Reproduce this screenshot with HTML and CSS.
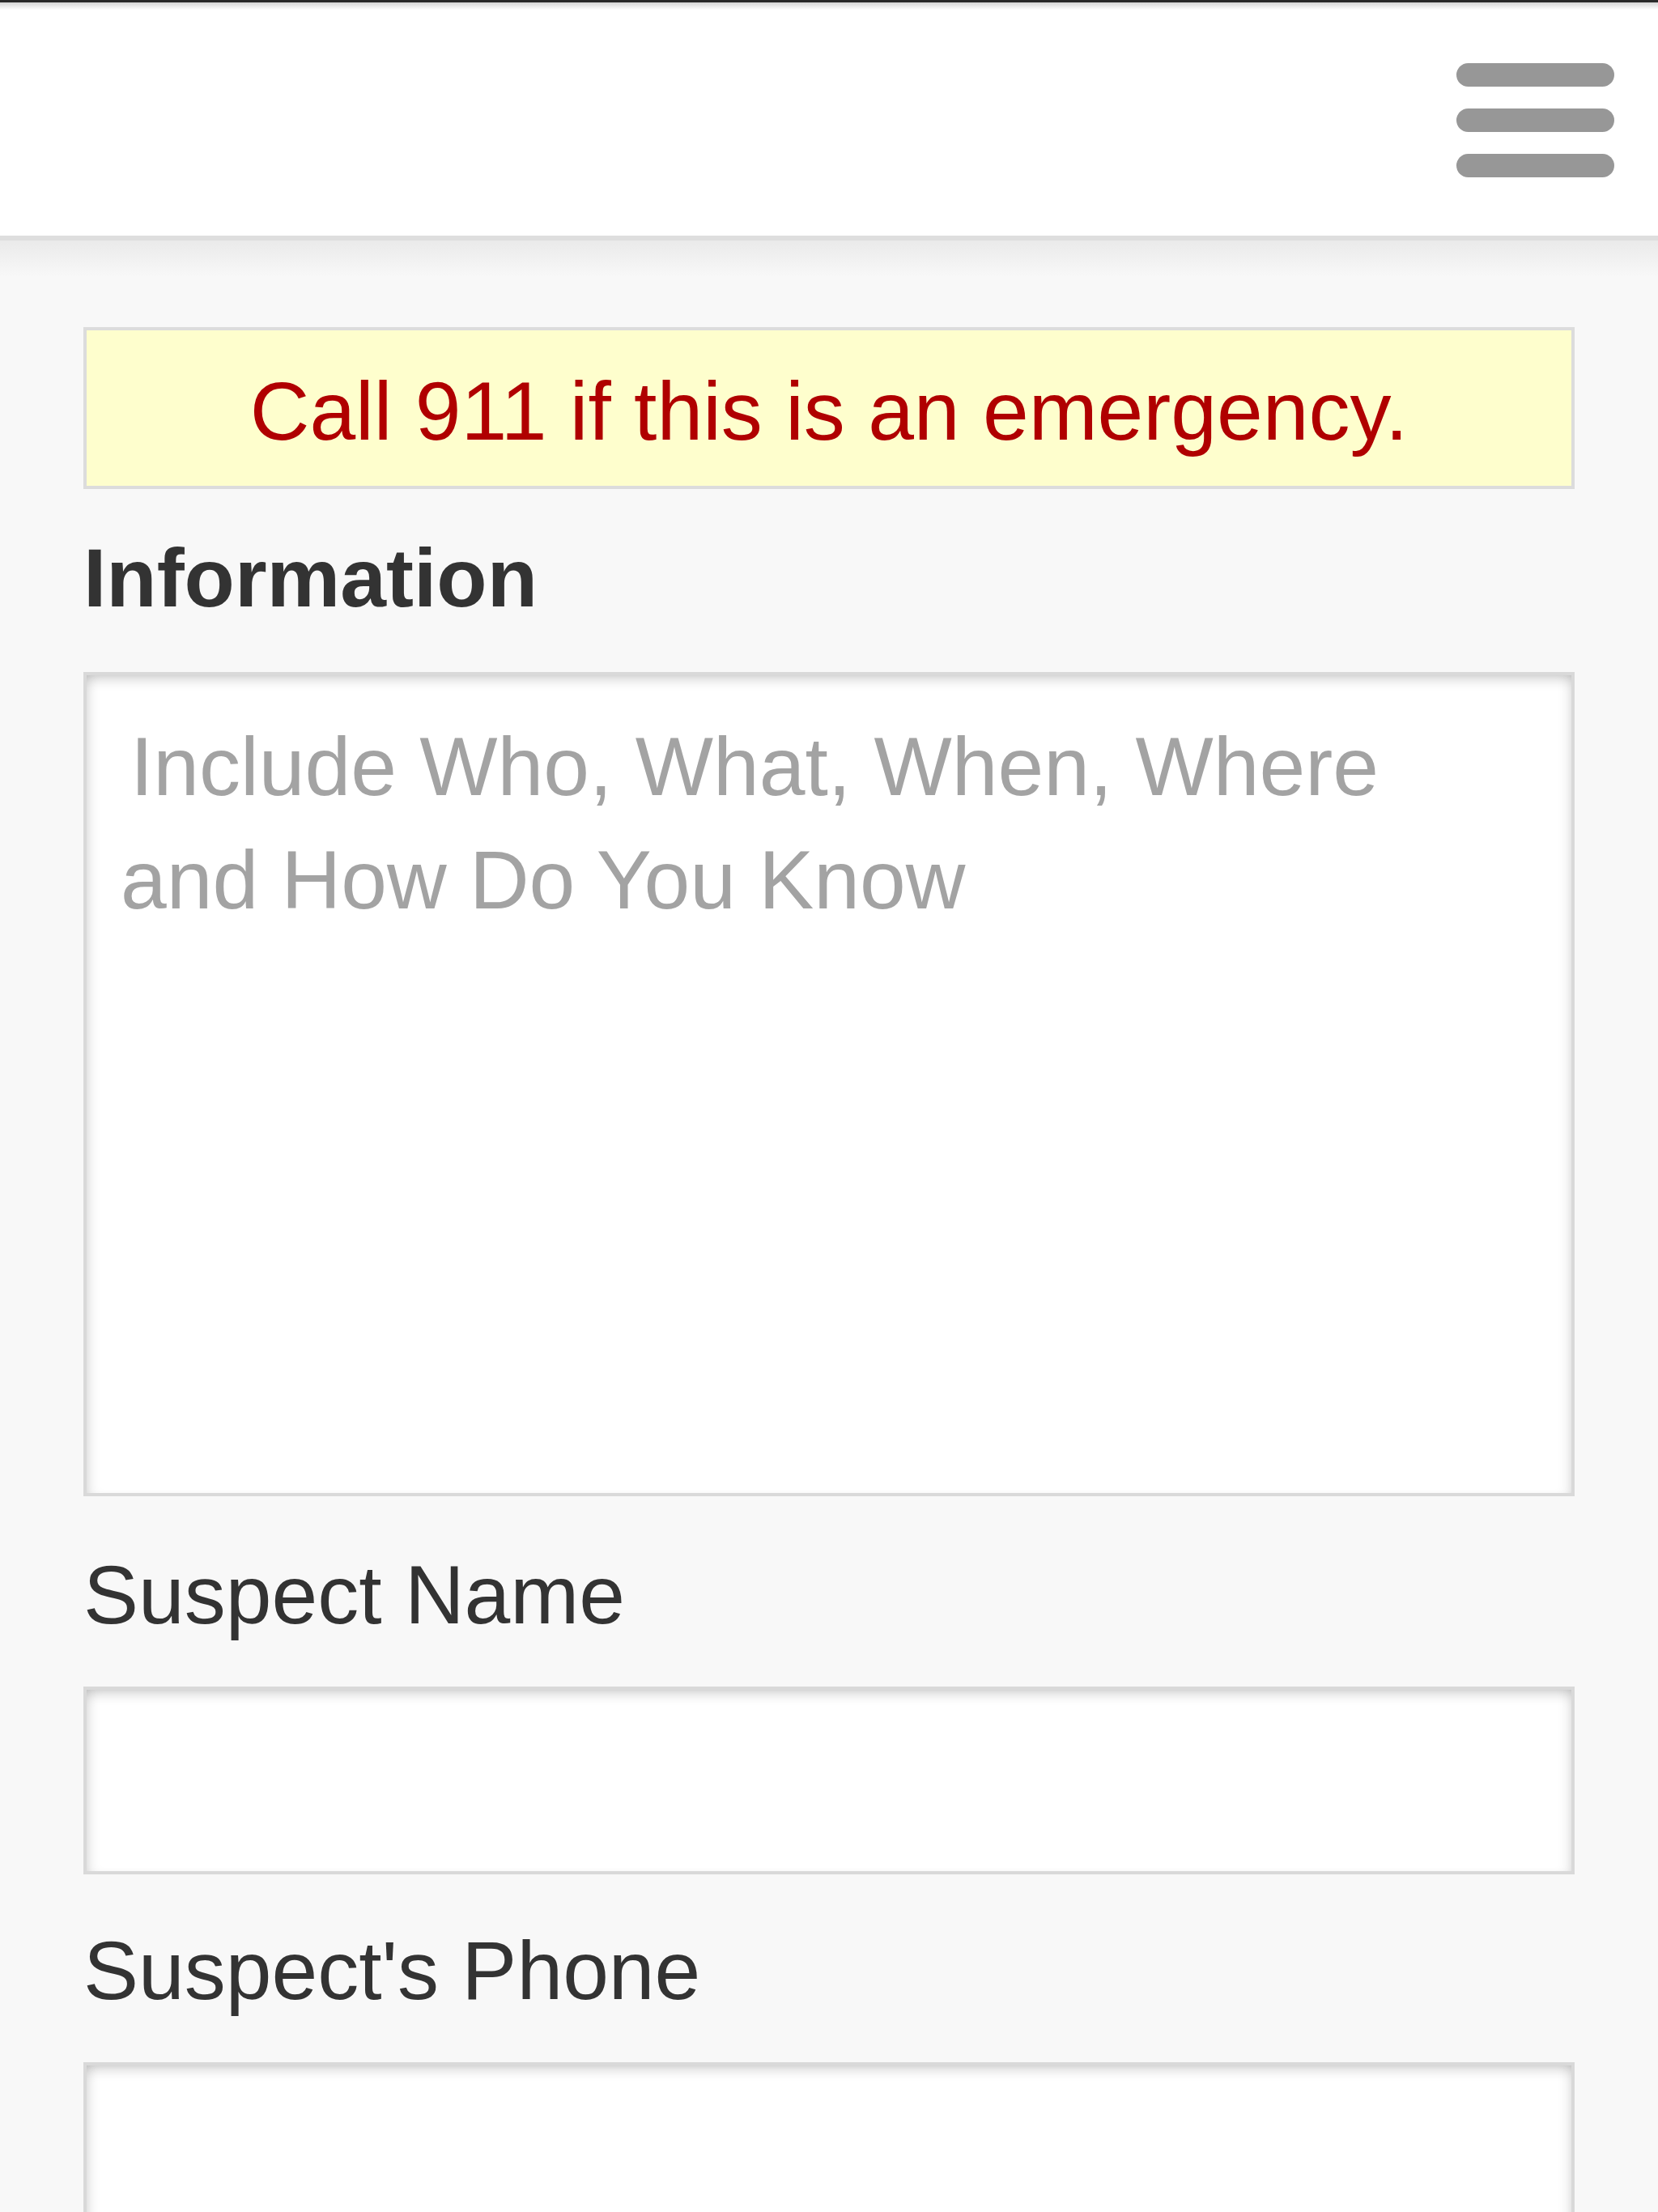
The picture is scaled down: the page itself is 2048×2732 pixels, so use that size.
FILE: index.html
```html
<!DOCTYPE html>
<html lang="en">
<head>
<meta charset="utf-8">
<title>Submit a Tip</title>
<link rel="stylesheet" href="styles.css">
</head>
<body>
<header class="topbar">
  <button class="menu-btn" type="button" aria-label="Menu">
    <span class="bar"></span>
    <span class="bar"></span>
    <span class="bar"></span>
  </button>
</header>
<main class="content">
  <div class="alert">Call 911 if this is an emergency.</div>
  <form class="tip-form">
    <label class="label label-bold" for="info">Information</label>
    <textarea id="info" class="field textarea" placeholder="Include Who, What, When, Where and How Do You Know"></textarea>
    <label class="label label-name" for="sname">Suspect Name</label>
    <input id="sname" class="field input" type="text">
    <label class="label label-phone" for="sphone">Suspect's Phone</label>
    <input id="sphone" class="field input" type="tel">
  </form>
</main>
</body>
</html>
```
FILE: styles.css
```css
html, body {
  margin: 0;
  padding: 0;
}
body {
  background: #f8f8f8;
  font-family: "Liberation Sans", Arial, Helvetica, sans-serif;
  color: #333;
  width: 2048px;
  min-height: 2732px;
  overflow: hidden;
}
.topbar {
  box-sizing: border-box;
  height: 297px;
  border-top: 3px solid #2a2a2a;
  border-bottom: 6px solid #dedede;
  background: linear-gradient(#d6d6d6, #ffffff 9px) #fff;
  display: flex;
  justify-content: flex-end;
  align-items: flex-start;
  padding: 75px 54px 0 0;
}
.menu-btn {
  background: none;
  border: 0;
  padding: 0;
  display: flex;
  flex-direction: column;
  gap: 27px;
  cursor: pointer;
}
.bar {
  display: block;
  width: 195px;
  height: 29px;
  border-radius: 15px;
  background: #979797;
}
.content {
  padding: 107px 103px 0;
  background: linear-gradient(#eaeaea, #f8f8f8 45px) #f8f8f8;
}
.alert {
  border: 4px solid #dcdcdc;
  background: #fefecd;
  color: #b00000;
  text-align: center;
  font-size: 102px;
  line-height: 120px;
  padding: 40px 0 32px;
}
.tip-form {
  display: flex;
  flex-direction: column;
}
.label {
  display: block;
  font-size: 102px;
  line-height: 120px;
  color: #333;
}
.label-bold {
  font-weight: bold;
  margin-top: 50px;
  margin-bottom: 56px;
}
.label-name {
  margin-top: 62px;
  margin-bottom: 53px;
}
.label-phone {
  margin-top: 59px;
  margin-bottom: 53px;
}
.field {
  display: block;
  box-sizing: border-box;
  width: 100%;
  margin: 0;
  border: 4px solid #d9d9d9;
  border-radius: 0;
  background: #fff;
  font-family: "Liberation Sans", Arial, Helvetica, sans-serif;
  font-size: 102px;
  color: #333;
  outline: none;
  box-shadow: inset 0 12px 16px -8px rgba(0, 0, 0, 0.2),
              inset 12px 0 16px -10px rgba(0, 0, 0, 0.14),
              inset -12px 0 16px -10px rgba(0, 0, 0, 0.12);
}
.textarea {
  height: 1018px;
  padding: 43px 80px 0 42px;
  line-height: 140px;
  text-indent: 12px;
  resize: none;
  overflow: hidden;
}
.textarea::placeholder {
  color: #a3a3a3;
  opacity: 1;
}
.input {
  height: 232px;
  padding: 0 42px;
}
```
